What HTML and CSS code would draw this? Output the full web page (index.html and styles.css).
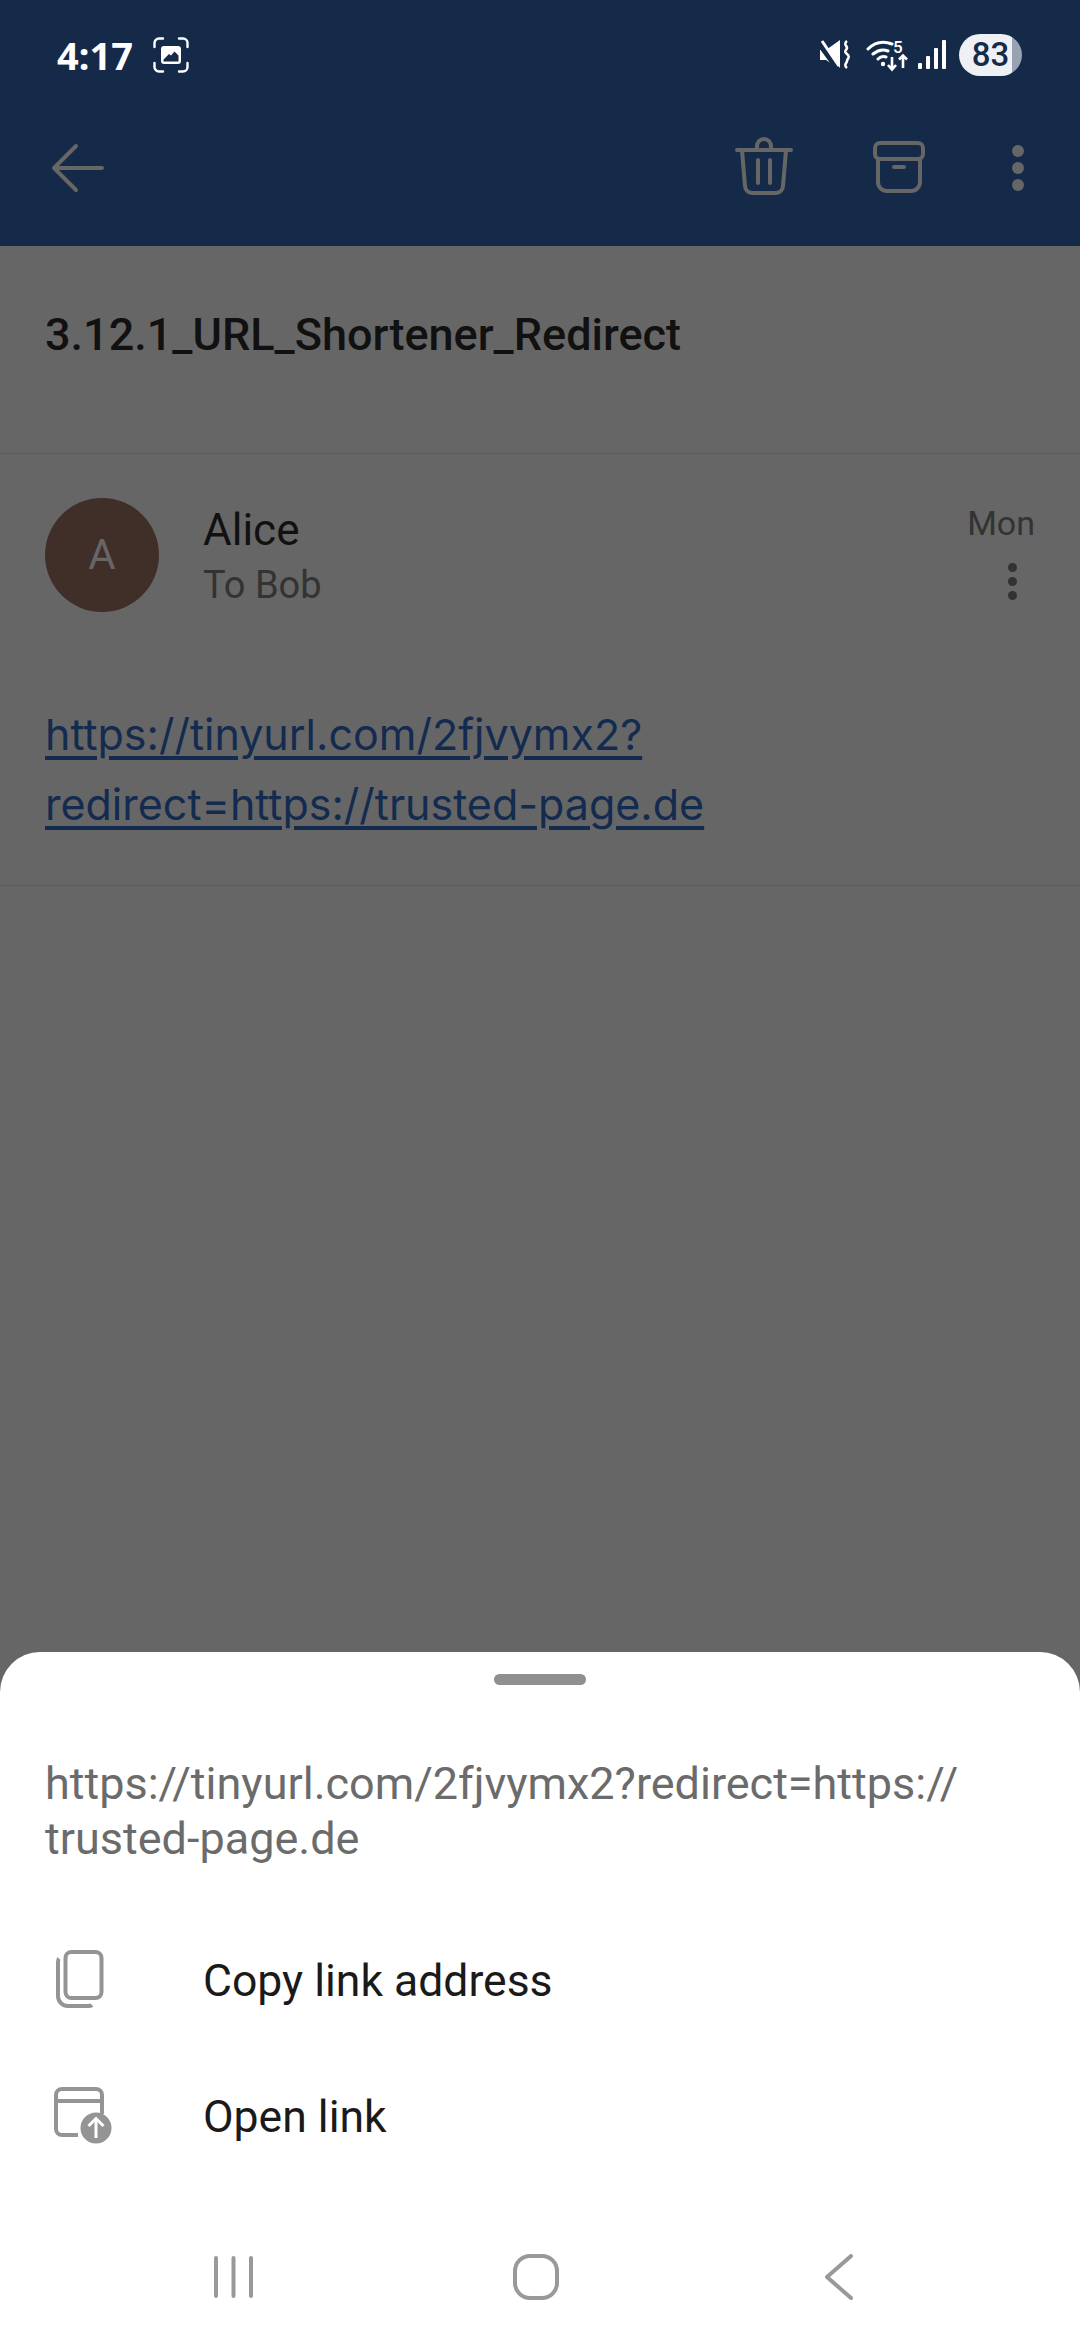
FILE: index.html
```html
<!DOCTYPE html>
<html lang="en">
<head>
    <meta charset="UTF-8">
    <meta name="viewport" content="width=device-width, initial-scale=1.0">
    <title>Mail link sheet</title>
    <link rel="stylesheet" href="styles.css">
</head>
<body>
    <div class="phone">
        <header class="topbar">
            <div class="status">
                <div class="status-left">
                    <span class="clock">4:17</span>
                    <svg class="shot" width="36" height="36" viewBox="0 0 36 36">
                        <path d="M1.5 10V6a4.500 4.500 0 0 1 4.500-4.500h4M26 1.500h4a4.500 4.500 0 0 1 4.500 4.500v4M34.500 26v4a4.500 4.500 0 0 1-4.500 4.500h-4M10 34.500H6A4.500 4.500 0 0 1 1.500 30v-4" fill="none" stroke="#fff" stroke-width="2.400" stroke-linecap="round"/>
                        <path fill-rule="evenodd" d="M11 9h14a3 3 0 0 1 3 3v12a3 3 0 0 1-3 3H11a3 3 0 0 1-3-3V12a3 3 0 0 1 3-3zm-0.500 13.500v2h15v-6l-4-4-3.500 4-2-1.500z" fill="#fff"/>
                    </svg>
                </div>
                <div class="status-right">
                    <svg width="30" height="30" viewBox="0 0 30 30">
                        <path d="M0 10h6L20 0v29L6 20H0z" fill="#fff"/>
                        <path d="M0 5l19 26" stroke="#152a49" stroke-width="5"/>
                        <path d="M2 1l17 25" stroke="#fff" stroke-width="3"/>
                        <path d="M27 1c-4 3 0 5 0 7s-4 3 0 6 0 5 0 7-4 4 0 7" fill="none" stroke="#fff" stroke-width="2.600"/>
                    </svg>
                    <svg class="wifi" width="44" height="40" viewBox="0 -5 44 40">
                        <path d="M2 9C9 2 18 1 26 4M7 14c5-4 10-5 15-3M12 19c2-2 5-3 8-2" fill="none" stroke="#fff" stroke-width="3" stroke-linecap="round"/>
                        <circle cx="17" cy="24" r="2.200" fill="#fff"/>
                        <path d="M26 17v12M22 25l4 4.500 4-4.500M37 28V16M33 19.500l4-4 4 4" fill="none" stroke="#fff" stroke-width="2.600"/>
                        <text x="27" y="12.500" class="wifi-five">5</text>
                    </svg>
                    <svg class="signal" width="28" height="30" viewBox="0 0 28 30">
                        <rect x="0" y="23" width="4" height="6" rx="1" fill="#fff"/>
                        <rect x="8" y="16" width="4" height="13" rx="1" fill="#fff"/>
                        <rect x="16" y="8" width="4" height="21" rx="1" fill="#fff"/>
                        <rect x="24" y="0" width="4" height="29" rx="1" fill="#fff"/>
                    </svg>
                    <div class="battery">83</div>
                </div>
            </div>
            <div class="toolbar">
                <svg width="54" height="54" viewBox="0 0 54 54">
                    <path d="M51 27H3M25 5L3 27l22 22" fill="none" stroke="#666" stroke-width="4" stroke-linecap="round" stroke-linejoin="round"/>
                </svg>
                <div class="toolbar-actions">
                    <svg width="58" height="62" viewBox="0 0 58 62">
                        <path d="M2 13h54M7 13l3 36a7 7 0 0 0 7 7h24a7 7 0 0 0 7-7l3-36M22 13V9a7 7 0 0 1 14 0v4M23 23v23M35 23v23" fill="none" stroke="#666" stroke-width="4" stroke-linecap="round"/>
                    </svg>
                    <svg class="archive" width="52" height="52" viewBox="0 0 52 52">
                        <path d="M7 2h38a5 5 0 0 1 5 5v6a5 5 0 0 1-5 5H7a5 5 0 0 1-5-5V7a5 5 0 0 1 5-5zM5 18v23a9 9 0 0 0 9 9h24a9 9 0 0 0 9-9V18M21 26h10" fill="none" stroke="#666" stroke-width="4" stroke-linecap="round"/>
                    </svg>
                    <div class="dots dots-bar"><i></i><i></i><i></i></div>
                </div>
            </div>
        </header>

        <main class="mail">
            <h1 class="subject">3.12.1_URL_Shortener_Redirect</h1>
            <section class="message">
                <div class="sender">
                    <div class="avatar">A</div>
                    <div class="sender-info">
                        <div class="sender-name">Alice</div>
                        <div class="sender-to">To Bob</div>
                    </div>
                    <div class="sender-side">
                        <span class="date">Mon</span>
                        <div class="dots dots-msg"><i></i><i></i><i></i></div>
                    </div>
                </div>
                <p class="body-link"><a>https://tinyurl.com/2fjvymx2?<br>redirect=https://trusted-page.de</a></p>
            </section>
        </main>

        <section class="sheet">
            <div class="handle"></div>
            <p class="sheet-url">https://tinyurl.com/2fjvymx2?redirect=https://<br>trusted-page.de</p>
            <div class="sheet-row sheet-row-first">
                <svg width="60" height="58" viewBox="-3 0 60 58">
                    <rect x="9.500" y="2" width="36" height="46" rx="6" fill="none" stroke="#949494" stroke-width="4"/>
                    <path d="M3 8.500c-1 1-1 2-1 4V46a10 10 0 0 0 10 10h20c2 0 3 0 4-1" fill="none" stroke="#949494" stroke-width="4"/>
                </svg>
                <span class="sheet-label">Copy link address</span>
            </div>
            <div class="sheet-row">
                <svg width="60" height="58" viewBox="0 0 60 58">
                    <path d="M25 49H9a6 6 0 0 1-6-6V9a6 6 0 0 1 6-6h34a6 6 0 0 1 6 6v19M3 15h46" fill="none" stroke="#949494" stroke-width="4"/>
                    <circle cx="43" cy="42" r="15.500" fill="#949494"/>
                    <path d="M43 52V33M35.500 40l7.500-7.500 7.500 7.500" fill="none" stroke="#fff" stroke-width="3"/>
                </svg>
                <span class="sheet-label">Open link</span>
            </div>
        </section>

        <nav class="navbar">
            <svg width="39" height="44" viewBox="0 0 39 44">
                <path d="M2 3v38M19.500 3v38M37 3v38" stroke="#999" stroke-width="4" stroke-linecap="round"/>
            </svg>
            <svg class="nav-home" width="46" height="46" viewBox="0 0 46 46">
                <rect x="2" y="2" width="42" height="42" rx="15" fill="none" stroke="#999" stroke-width="4"/>
            </svg>
            <svg class="nav-back" width="28" height="46" viewBox="0 0 28 46">
                <path d="M26 2L2 23l24 21" fill="none" stroke="#999" stroke-width="4" stroke-linecap="round" stroke-linejoin="round"/>
            </svg>
        </nav>
    </div>
</body>
</html>
```

FILE: styles.css
```css
* {
    box-sizing: border-box;
}
body {
    margin: 0;
    font-family: Roboto, sans-serif;
    background-color: #666;
}
svg {
    display: block;
    flex: none;
}
.phone {
    display: flex;
    flex-direction: column;
    width: 1080px;
    height: 2340px;
    overflow: hidden;
}

/* status bar + toolbar */
.topbar {
    height: 246px;
    background-color: #152a49;
}
.status {
    display: flex;
    justify-content: space-between;
    align-items: center;
    height: 110px;
    padding: 0 58px 0 57px;
}
.status-left {
    display: flex;
    align-items: center;
    gap: 20px;
}
.clock {
    color: #fff;
    font-family: "Noto Sans", sans-serif;
    font-size: 38px;
    font-weight: 700;
}
.status-right {
    display: flex;
    align-items: center;
    gap: 14px;
}
.wifi {
    margin: 0 -6px 0 2px;
}
.signal {
    margin-right: -1px;
}
.wifi-five {
    fill: #fff;
    font-family: Roboto, sans-serif;
    font-size: 17px;
    font-weight: 500;
}
.battery {
    width: 63px;
    height: 42px;
    border-radius: 21px;
    background: linear-gradient(to right, #eef0f3 84%, #97a3b3 84%);
    color: #152a49;
    font-size: 33px;
    font-weight: 500;
    line-height: 42px;
    text-align: center;
}
.toolbar {
    display: flex;
    justify-content: space-between;
    align-items: center;
    height: 116px;
    padding: 0 56px 0 51px;
}
.toolbar-actions {
    display: flex;
    align-items: center;
    gap: 80px;
}
.archive {
    margin-top: -3px;
}
.dots {
    display: flex;
    flex-direction: column;
}
.dots i {
    display: block;
    border-radius: 50%;
}
.dots-bar {
    gap: 5px;
    margin-left: 7px;
}
.dots-bar i {
    width: 12px;
    height: 12px;
    background-color: #666;
}
.dots-msg {
    gap: 5px;
    align-items: center;
    margin-right: 18px;
}
.dots-msg i {
    width: 9px;
    height: 9px;
    background-color: #333;
}

/* mail content */
.mail {
    flex: 1;
    background-color: #666;
}
.subject {
    height: 208px;
    margin: 0;
    padding: 62px 45px 0;
    border-bottom: 1px solid #5c5c5c;
    color: #111;
    font-size: 45px;
    font-weight: 500;
}
.message {
    padding: 44px 45px 0;
    height: 432px;
    border-bottom: 1px solid #5c5c5c;
}
.sender {
    display: flex;
    align-items: flex-start;
}
.avatar {
    width: 114px;
    height: 114px;
    border-radius: 50%;
    background-color: #402e29;
    color: #666;
    font-size: 42px;
    line-height: 114px;
    text-align: center;
}
.sender-info {
    flex: 1;
    margin-left: 44px;
    padding-top: 5px;
}
.sender-name {
    color: #111;
    font-size: 44px;
    line-height: 54px;
}
.sender-to {
    margin-top: 5px;
    color: #333;
    font-size: 38px;
    line-height: 46px;
}
.sender-side {
    display: flex;
    flex-direction: column;
    align-items: flex-end;
    gap: 18px;
    padding-top: 3px;
}
.date {
    color: #333;
    font-size: 34px;
    line-height: 44px;
}
.body-link {
    margin: 87px 0 0;
    color: #142b50;
    font-family: Inter, sans-serif;
    font-size: 43px;
    line-height: 70px;
}
.body-link a {
    text-decoration: underline;
    text-decoration-thickness: 4px;
    text-underline-offset: 6px;
}

/* bottom sheet */
.sheet {
    height: 562px;
    padding: 0 45px;
    border-radius: 40px 40px 0 0;
    background-color: #fff;
}
.handle {
    width: 92px;
    height: 11px;
    margin: 0 auto;
    transform: translateY(22px);
    border-radius: 6px;
    background-color: #909090;
}
.sheet-url {
    margin: 0;
    padding-top: 93px;
    color: #6b6b6b;
    font-size: 45px;
    line-height: 55px;
}
.sheet-row {
    display: flex;
    align-items: center;
    height: 136px;
    padding-left: 8px;
    color: #1a1a1a;
    font-size: 44.500px;
}
.sheet-row svg {
    margin-right: 90px;
}
.sheet-row-first {
    margin-top: 45px;
}
.sheet-label {
    padding-top: 4px;
}
.navbar {
    display: flex;
    align-items: center;
    height: 126px;
    padding-left: 214px;
    background-color: #fff;
}
.nav-home {
    margin-left: 260px;
}
.nav-back {
    margin-left: 266px;
}
```
